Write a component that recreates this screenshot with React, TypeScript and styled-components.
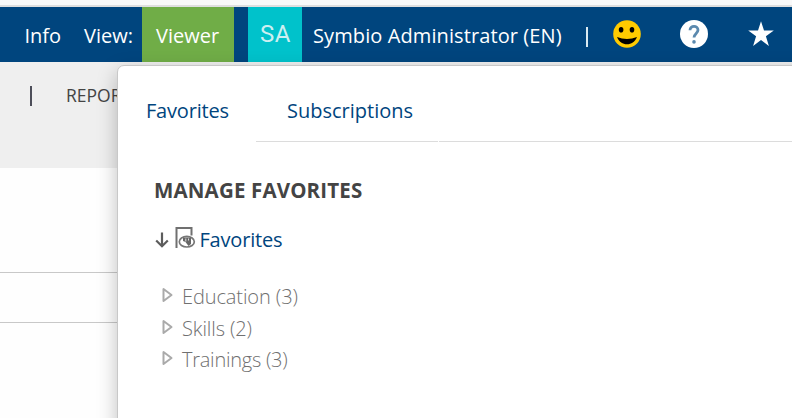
import React from 'react';
import styled, { createGlobalStyle } from 'styled-components';

const GlobalStyle = createGlobalStyle`
  * { box-sizing: border-box; }
  body {
    margin: 0;
    background: #fff;
    font-family: 'Open Sans', 'Noto Sans', sans-serif;
  }
`;

const Page = styled.div`
  position: relative;
  width: 792px;
  height: 418px;
  overflow: hidden;
  background: #fefefe;
`;

const TopEdge = styled.div`
  height: 7px;
  background: #f9f9f9;
  border-bottom: 2px solid #dfdfdf;
`;

const Header = styled.header`
  display: flex;
  height: 55px;
  background: #00457e;
`;

const Label = styled.span<{ $spacing?: number; $size?: number; $color?: string; $weight?: number }>`
  display: block;
  flex: none;
  white-space: nowrap;
  line-height: 28px;
  font-size: ${(p) => p.$size ?? 20}px;
  font-weight: ${(p) => p.$weight ?? 400};
  letter-spacing: ${(p) => p.$spacing ?? 0}px;
  color: ${(p) => p.$color ?? '#fff'};
`;

const HeaderCell = styled.div<{ $width: number; $pad?: number; $bg?: string }>`
  flex: none;
  width: ${(p) => p.$width}px;
  padding: 15px 0 0 ${(p) => p.$pad ?? 0}px;
  background: ${(p) => p.$bg ?? 'transparent'};
`;

const Initials = styled(HeaderCell)`
  margin-left: 14px;
  padding-top: 13px;
  font-family: Roboto, sans-serif;
`;

const Divider = styled.i<{ $color: string }>`
  display: block;
  flex: none;
  width: 2px;
  height: 20px;
  margin-top: 5px;
  background: ${(p) => p.$color};
`;

const HeaderIcon = styled.svg`
  display: block;
  flex: none;
  width: 28px;
  height: 28px;
  margin: 13px 39px 0 0;
`;

const SubBar = styled.div`
  display: flex;
  height: 106px;
  padding: 19px 0 0 30px;
  gap: 34px;
  background: #efefef;
`;

const Rule = styled.div<{ $gap: number }>`
  height: ${(p) => p.$gap}px;
  border-bottom: 1px solid #c8c8c8;
`;

const Panel = styled.section`
  position: absolute;
  left: 117px;
  top: 65px;
  width: 720px;
  height: 400px;
  background: #fff;
  border: 1px solid #c8c8c8;
  border-radius: 7px 0 0 0;
  box-shadow: 0 7px 20px rgba(0, 0, 0, 0.25);
`;

const Tabs = styled.nav`
  display: flex;
  height: 76px;
`;

const Tab = styled.div<{ $width: number; $pad: number; $line?: boolean }>`
  flex: none;
  width: ${(p) => p.$width}px;
  padding: 31px 0 0 ${(p) => p.$pad}px;
  border-bottom: 1px solid ${(p) => (p.$line ? '#dcdcdc' : 'transparent')};
  margin-right: 1px;
`;

const Content = styled.div`
  padding: 34px 0 0 36px;
`;

const FolderRow = styled.div`
  display: flex;
  align-items: center;
  height: 28px;
  margin-top: 22px;
`;

const FolderIcons = styled.svg`
  flex: none;
  width: 45.5px;
  height: 28px;
`;

const Tree = styled.ul`
  list-style: none;
  margin: 29px 0 0 7px;
  padding: 0;
`;

const TreeItem = styled.li`
  display: flex;
  height: 31.5px;
`;

const Arrow = styled.svg`
  flex: none;
  width: 14px;
  height: 18px;
  margin: 3px 7px 0 0;
`;

const groups = [
  { text: 'Education (3)', spacing: -0.1 },
  { text: 'Skills (2)', spacing: -0.1 },
  { text: 'Trainings (3)', spacing: -0.25 },
];

export default function App() {
  return (
    <Page>
      <GlobalStyle />
      <TopEdge />
      <Header>
        <HeaderCell $width={84} $pad={24.5}><Label>Info</Label></HeaderCell>
        <HeaderCell $width={58}><Label>View:</Label></HeaderCell>
        <HeaderCell $width={92} $pad={14} $bg="#70ad47"><Label>Viewer</Label></HeaderCell>
        <Initials $width={54} $pad={12} $bg="#00c2cb">
          <Label $size={24} $color="#cceff1" $spacing={0.4}>SA</Label>
        </Initials>
        <HeaderCell $width={284} $pad={11}><Label $spacing={0.1}>Symbio Administrator (EN)</Label></HeaderCell>
        <HeaderCell $width={27}><Divider $color="#d9eaf2" /></HeaderCell>
        <HeaderIcon viewBox="0 0 28 28">
          <circle cx="14" cy="14" r="13.8" fill="#ffcb00" />
          <ellipse cx="8.1" cy="9.8" rx="2.3" ry="2.8" />
          <ellipse cx="19" cy="9.8" rx="2.3" ry="2.8" />
          <path d="M4 17Q14 21.2 24 17C22 22 18.2 24.3 14 24.3S6 22 4 17Z" />
        </HeaderIcon>
        <HeaderIcon viewBox="0 0 28 28">
          <circle cx="14" cy="14" r="14" fill="#fff" />
          <path d="M10 10.2C10 5.2 18 5.1 18 10c0 3.3-4 3.6-4 7.6" fill="none" stroke="#5b89ae" strokeWidth="2.8" />
          <circle cx="14" cy="21.9" r="1.8" fill="#5b89ae" />
        </HeaderIcon>
        <HeaderIcon viewBox="0 0 28 28">
          <path d="M14 1.3l3 9.2h9.8l-7.9 5.8 3 9.6-7.9-5.8-7.9 5.8 3-9.6-7.9-5.8H11z" fill="#fff" />
        </HeaderIcon>
      </Header>
      <SubBar>
        <Divider $color="#4d4e59" />
        <Label $size={17.5} $color="#444">REPORTS</Label>
      </SubBar>
      <Rule $gap={105} />
      <Rule $gap={50} />
      <Panel>
        <Tabs>
          <Tab $width={137} $pad={28}><Label $color="#00457e" $spacing={-0.2}>Favorites</Label></Tab>
          <Tab $width={182} $pad={31} $line><Label $color="#00457e">Subscriptions</Label></Tab>
          <Tab $width={400} $pad={0} $line />
        </Tabs>
        <Content>
          <Label $weight={700} $color="#444" $size={20.5} $spacing={0.15}>MANAGE FAVORITES</Label>
          <FolderRow>
            <FolderIcons viewBox="0 0 45.5 28" fill="none" stroke="#5c5c5c" strokeWidth="2">
              <path d="M8 6.5v13.5M2.2 14.5l5.8 5.7 5.8-5.7" strokeWidth="2.2" />
              <path d="M22.5 22V2h15v7.5" stroke="#707070" />
              <ellipse cx="32.8" cy="15.7" rx="7.5" ry="5.3" stroke="#777" strokeWidth="1.7" />
              <path d="M29 11.5h8v6.5l-2.5 2-3-4-2.5-1z" fill="#666" stroke="none" />
              <path d="M31.8 12.5v3M34.5 12.5v2" stroke="#ddd" strokeWidth="1" />
            </FolderIcons>
            <Label $color="#00457e" $spacing={-0.2}>Favorites</Label>
          </FolderRow>
          <Tree>
            {groups.map((g) => (
              <TreeItem key={g.text}>
                <Arrow viewBox="0 0 14 18">
                  <path d="M2.5 3v12l8-6z" fill="none" stroke="#aaa" strokeWidth="2" strokeLinejoin="round" />
                </Arrow>
                <Label $weight={300} $color="#707070" $spacing={g.spacing}>{g.text}</Label>
              </TreeItem>
            ))}
          </Tree>
        </Content>
      </Panel>
    </Page>
  );
}
